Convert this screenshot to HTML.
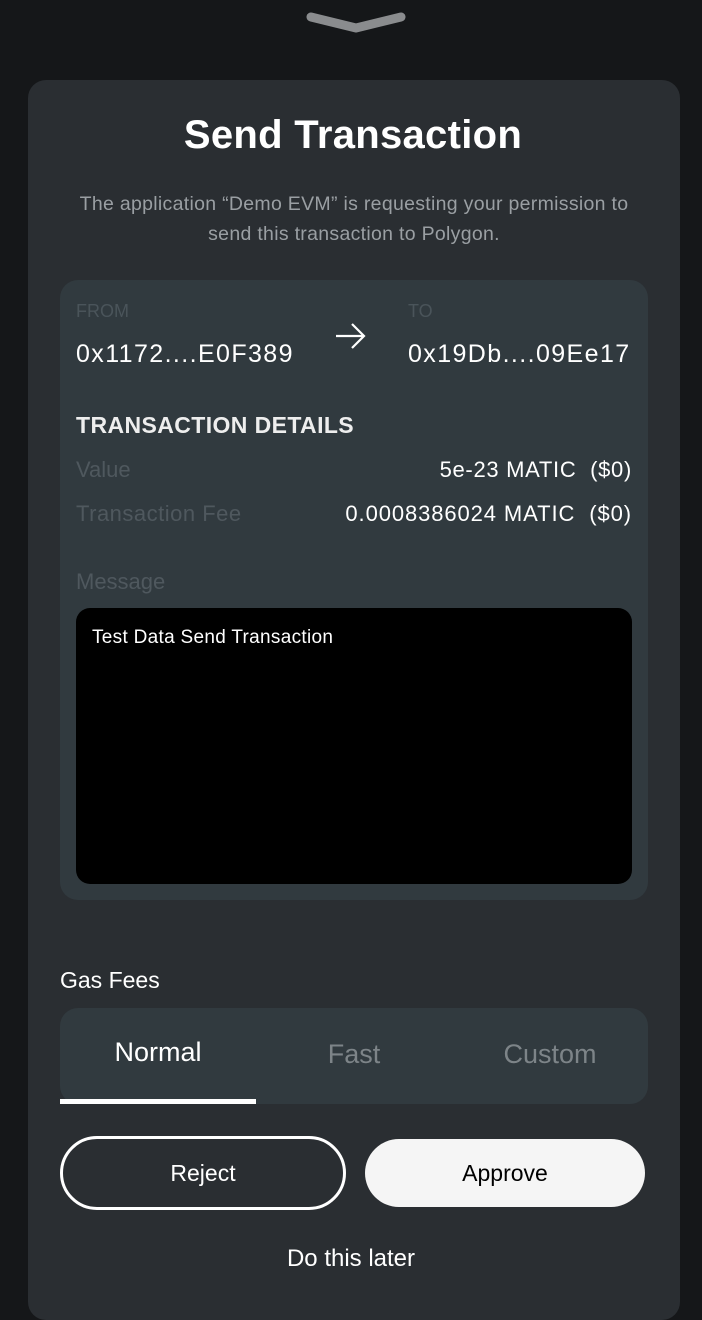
<!DOCTYPE html>
<html><head><style>
*{margin:0;padding:0;box-sizing:border-box}
body{width:702px;height:1300px;background:#151719;font-family:"Liberation Sans",sans-serif;position:relative;overflow:hidden;color:#fff}
.abs{position:absolute;white-space:pre}
.card{left:28px;top:80px;width:652px;height:1240px;background:#2a2e32;border-radius:18px}
.inner{left:60px;top:280px;width:588px;height:620px;background:#313a3f;border-radius:18px}
.lbl{color:#4a545a;font-size:18px}
.dim{color:#4f585e;font-size:22px}
.v{font-size:25px;color:#fff;letter-spacing:1.4px}
</style></head><body>
<svg class="abs" style="left:305px;top:10px" width="102" height="24"><path d="M6 7 L51 18 L96 7" stroke="#8a8c8e" stroke-width="9" fill="none" stroke-linecap="round" stroke-linejoin="round"/></svg>
<div class="abs card"></div>
<div class="abs" style="left:2px;width:702px;top:113px;text-align:center;font-size:40px;font-weight:bold;letter-spacing:0.3px">Send Transaction</div>
<div class="abs" style="left:40px;width:628px;top:189px;text-align:center;font-size:19.5px;line-height:30px;color:#9a9fa3;letter-spacing:0.3px">The application “Demo EVM” is requesting your permission to
send this transaction to Polygon.</div>
<div class="abs inner"></div>
<div class="abs lbl" style="left:76px;top:301px">FROM</div>
<div class="abs lbl" style="left:408px;top:301px">TO</div>
<div class="abs v" style="left:76px;top:340px">0x1172....E0F389</div>
<div class="abs v" style="left:408px;top:340px">0x19Db....09Ee17</div>
<svg class="abs" style="left:333px;top:321px" width="36" height="30"><path d="M3 15 H31 M19 3 L31 15 L19 27" stroke="#fff" stroke-width="2.2" fill="none"/></svg>
<div class="abs" style="left:76px;top:412px;font-size:23px;font-weight:bold;color:#eee;letter-spacing:0.4px">TRANSACTION DETAILS</div>
<div class="abs dim" style="left:76px;top:457px">Value</div>
<div class="abs" style="right:70px;top:457px;font-size:22px;letter-spacing:0.7px">5e-23 MATIC  ($0)</div>
<div class="abs dim" style="left:76px;top:501px;letter-spacing:0.5px">Transaction Fee</div>
<div class="abs" style="right:70px;top:501px;font-size:22px;letter-spacing:0.9px">0.0008386024 MATIC  ($0)</div>
<div class="abs dim" style="left:76px;top:569px">Message</div>
<div class="abs" style="left:76px;top:608px;width:556px;height:276px;background:#000;border-radius:14px;padding:19px 16px;font-size:19px;letter-spacing:0.3px">Test Data Send Transaction</div>
<div class="abs" style="left:60px;top:967px;font-size:23px">Gas Fees</div>
<div class="abs" style="left:60px;top:1008px;width:588px;height:96px;background:#313a3f;border-radius:18px"></div>
<div class="abs" style="left:60px;top:1037px;width:196px;text-align:center;font-size:27px">Normal</div>
<div class="abs" style="left:256px;top:1039px;width:196px;text-align:center;font-size:27px;color:#7d8488">Fast</div>
<div class="abs" style="left:452px;top:1039px;width:196px;text-align:center;font-size:27px;color:#7d8488">Custom</div>
<div class="abs" style="left:60px;top:1099px;width:196px;height:5px;background:#fff"></div>
<div class="abs" style="left:60px;top:1136px;width:286px;height:74px;border:3px solid #fff;border-radius:37px;text-align:center;line-height:68px;font-size:23px">Reject</div>
<div class="abs" style="left:365px;top:1139px;width:280px;height:68px;background:#f5f5f5;border-radius:34px;text-align:center;line-height:68px;font-size:23px;color:#000">Approve</div>
<div class="abs" style="left:0;width:702px;top:1245px;text-align:center;font-size:24px">Do this later</div>
</body></html>
